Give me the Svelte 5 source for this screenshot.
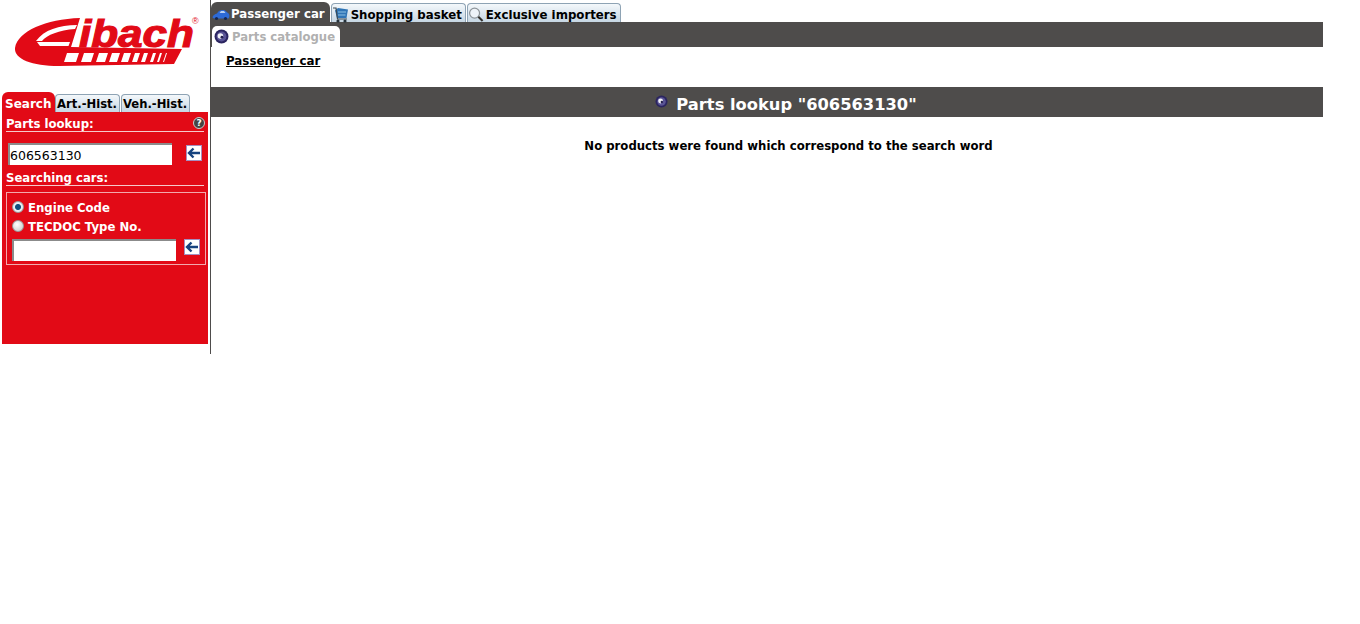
<script>
  const term = '606563130';
  const topTabs = [
    { label: 'Passenger car', icon: 'car', active: true },
    { label: 'Shopping basket', icon: 'basket', active: false },
    { label: 'Exclusive importers', icon: 'lens', active: false }
  ];
  const sideTabs = ['Search', 'Art.-Hist.', 'Veh.-Hist.'];
</script>

{#snippet arrow()}
  <button class="go" aria-label="Go">
    <svg width="14" height="12" viewBox="0 0 14 12">
      <path d="M6.500 1.500 2 6l4.500 4.500M2.500 6H13" fill="none" stroke="#17437f" stroke-width="2.400" />
    </svg>
  </button>
{/snippet}

{#snippet disc(size)}
  <svg width={size} height={size} viewBox="0 0 14 14">
    <circle cx="7" cy="7" r="6.500" fill="#2b2560" />
    <circle cx="7" cy="7" r="4.600" fill="#5a5496" />
    <circle cx="6" cy="6.500" r="2.600" fill="#f1f1f6" />
    <circle cx="7.400" cy="7.600" r="1.300" fill="#24204f" />
  </svg>
{/snippet}

<div class="page">
  <aside class="side">
    <div class="logo">
      <svg width="186" height="52" viewBox="0 0 186 52">
        <path d="M1 33C4 16 32 4 66 3L57 32 168 34 160 49 45 51C18 51 0 44 1 33Z" fill="#e20a16" />
        <path d="M63 10C45 10 30 15 22 26H28C33 20 45 15 61 14ZM23 27H56L54.500 31H26Z" fill="#fff" />
        <text x="65" y="32" class="logo-word" textLength="115" lengthAdjust="spacingAndGlyphs">ibach</text>
        <path fill="#fff" d="M53 38h12l-3 9H50ZM70 38h10l-3 9H67ZM85 38h9l-3 9h-9ZM98 38h8l-3 9h-8ZM110 38h7l-3 9h-7ZM121 38h5l-3 9h-5ZM130 38h4l-3 9h-4ZM139 38h3l-3 9h-3ZM146 38h2l-3 9h-2ZM152 38h1l-3 9h-1Z" />
        <text x="178" y="9" class="logo-mark">®</text>
      </svg>
    </div>

    <div class="side-tabs">
      {#each sideTabs as tab, i}
        <div class="side-tab" class:on={i === 0}>{tab}</div>
      {/each}
    </div>

    <div class="panel">
      <div class="heading">
        <span>Parts lookup:</span>
        <span class="help">?</span>
      </div>
      <div class="field-row first">
        <input class="first-input" value={term} />
        {@render arrow()}
      </div>
      <div class="heading">Searching cars:</div>
      <div class="box">
        <label class="radio"><input type="radio" name="kind" checked />Engine Code</label>
        <label class="radio"><input type="radio" name="kind" />TECDOC Type No.</label>
        <div class="field-row">
          <input class="second-input" />
          {@render arrow()}
        </div>
      </div>
    </div>
  </aside>

  <main class="main">
    <nav class="top-tabs">
      {#each topTabs as tab}
        <div class="top-tab" class:on={tab.active}>
          {#if tab.icon === 'car'}
            <svg width="18" height="13" viewBox="0 0 18 13">
              <path d="M0.500 9.500C0.500 7.500 3 6 5 5.500 7 2 10 1.500 13 2.500L16 5C17.800 6 17.800 9 16.500 10.500H2Z" fill="#2d6ad6" />
              <path d="M7.500 5 9 3h3L13.500 5Z" fill="#b9d0f2" />
              <circle cx="4.500" cy="10.500" r="1.600" fill="#14264f" />
              <circle cx="13.500" cy="10.500" r="1.600" fill="#14264f" />
            </svg>
          {:else if tab.icon === 'basket'}
            <svg width="17" height="16" viewBox="0 0 17 16">
              <path d="M3 3.500 6 1l10 1.500L14.500 11H5Z" fill="#2f74b5" />
              <path d="M6 5h8M6 8h7.500" stroke="#8cc0e4" />
              <path d="M1 1h3l1.500 11H15" fill="none" stroke="#3c4a55" stroke-width="1.200" />
              <circle cx="6" cy="14" r="1.600" fill="#26323b" />
              <circle cx="13" cy="14" r="1.600" fill="#26323b" />
            </svg>
          {:else}
            <svg width="16" height="17" viewBox="0 0 17 17">
              <circle cx="7" cy="7" r="5.300" fill="#eef3f8" stroke="#8d9499" stroke-width="1.300" />
              <path d="M11 11l4.500 4.500" stroke="#33302c" stroke-width="2.200" />
            </svg>
          {/if}
          <span>{tab.label}</span>
        </div>
      {/each}
    </nav>

    <div class="sub-bar">
      <div class="sub-tab">
        {@render disc(15)}
        <span>Parts catalogue</span>
      </div>
    </div>

    <div class="crumb"><span>Passenger car</span></div>

    <h1 class="title">
      {@render disc(13)}
      <span>Parts lookup "{term}"</span>
    </h1>

    <p class="empty">No products were found which correspond to the search word</p>
  </main>
</div>

<style>
  :global(body) {
    margin: 0;
    background: #fff;
  }

  .page {
    display: flex;
    width: 1323px;
    height: 354px;
    font-family: "DejaVu Sans", Verdana, sans-serif;
    font-size: 12px;
    font-weight: 700;
    color: #000;
  }

  .side {
    width: 210px;
    flex: none;
    box-sizing: border-box;
    padding-left: 2px;
  }

  .logo {
    height: 92px;
    box-sizing: border-box;
    padding: 15px 0 0 12px;
  }

  .logo svg {
    display: block;
    overflow: visible;
  }

  .logo-word {
    font-family: "Liberation Sans", Arial, sans-serif;
    font-size: 39px;
    font-weight: 700;
    font-style: italic;
    fill: #e20a16;
    stroke: #e20a16;
    stroke-width: 1.200px;
  }

  .logo-mark {
    font-family: "Liberation Sans", Arial, sans-serif;
    font-size: 9px;
    font-weight: 400;
    fill: #e20a16;
  }

  .side-tabs {
    display: flex;
    height: 20px;
    align-items: flex-end;
  }

  .side-tab {
    height: 18px;
    line-height: 19px;
    padding: 0 2px 0 1px;
    margin-right: 1px;
    box-sizing: border-box;
    border: 1px solid #8ea3b4;
    border-bottom: 0;
    border-radius: 4px 4px 0 0;
    background: linear-gradient(#f4f8fb, #c6d6e3);
    font-size: 11.600px;
    white-space: nowrap;
  }

  .side-tab.on {
    height: 20px;
    line-height: 24px;
    width: 53px;
    padding: 0 3px;
    margin-right: 0;
    border: 0;
    border-radius: 6px 6px 0 0;
    background: #e20a16;
    color: #fff;
    font-size: 12px;
  }

  .panel {
    width: 206px;
    height: 232px;
    box-sizing: border-box;
    padding: 3px 4px 0;
    background: #e20a16;
    color: #fff;
    font-size: 11.700px;
  }

  .heading {
    display: flex;
    justify-content: space-between;
    align-items: flex-start;
    height: 16px;
    line-height: 18px;
    border-bottom: 1px solid #f6c9cb;
  }

  .help {
    width: 12px;
    height: 12px;
    margin: 2px -1px 0 0;
    border-radius: 50%;
    background: #444;
    border: 1px solid #ccc;
    box-sizing: border-box;
    font-size: 9px;
    line-height: 10px;
    text-align: center;
  }

  .field-row {
    display: flex;
    align-items: flex-start;
  }

  .field-row.first {
    height: 22px;
    margin: 11px 0 4px;
  }

  .field-row.first .go {
    margin-top: 2px;
  }

  input:not([type]) {
    height: 22px;
    box-sizing: border-box;
    border: 0;
    border-top: 2px solid #8b8b8b;
    border-left: 2px solid #8b8b8b;
    padding: 0;
    background: #fff;
    font-family: "DejaVu Sans", Verdana, sans-serif;
    font-size: 12.500px;
    color: #000;
    outline: none;
  }

  .first-input {
    width: 164px;
    margin: 0 14px 0 2px;
  }

  .second-input {
    width: 164px;
    margin-right: 8px;
  }

  .go {
    width: 16px;
    height: 16px;
    padding: 0;
    border: 1px solid #a58fc0;
    background: #fff;
    display: flex;
    align-items: center;
    justify-content: center;
  }

  .box {
    margin-top: 6px;
    width: 200px;
    height: 73px;
    box-sizing: border-box;
    border: 1px solid #f2a9ad;
    padding: 5px 5px 0;
  }

  .radio {
    display: flex;
    align-items: center;
    height: 19px;
    white-space: nowrap;
  }

  .radio input {
    appearance: none;
    width: 12px;
    height: 12px;
    margin: 0 4px 2px 0;
    border-radius: 50%;
    background: radial-gradient(circle at 40% 35%, #fff, #c4c4c4);
    border: 1px solid #9a9a9a;
    box-sizing: border-box;
  }

  .radio input:checked {
    background: radial-gradient(circle at 50% 50%, #0f4f7f 0 2.500px, #e6eef3 3.500px);
  }

  .box .field-row {
    margin-top: 3px;
  }

  .main {
    flex: 1;
    min-width: 0;
    border-left: 1px solid #4e4c4b;
  }

  .top-tabs {
    display: flex;
    height: 22px;
    padding-top: 2px;
    box-sizing: border-box;
    align-items: flex-end;
  }

  .top-tab {
    display: flex;
    align-items: center;
    gap: 2px;
    height: 19px;
    box-sizing: border-box;
    padding: 3px 3px 0 0;
    margin-right: 1px;
    border: 1px solid #8ea3b4;
    border-bottom: 0;
    border-radius: 4px 4px 0 0;
    background: linear-gradient(#f4f8fb, #c6d6e3);
    font-size: 11.780px;
    white-space: nowrap;
  }

  .top-tab.on {
    height: 20px;
    gap: 1px;
    padding: 4px 5px 0 1px;
    border: 0;
    border-radius: 6px 6px 0 0;
    background: #4e4c4b;
    color: #fff;
  }

  .sub-bar {
    height: 25px;
    background: #4e4c4b;
    display: flex;
    align-items: flex-end;
    padding-left: 1px;
  }

  .sub-tab {
    display: flex;
    align-items: center;
    gap: 3px;
    height: 21px;
    box-sizing: border-box;
    padding: 0 5px 0 2px;
    background: #fff;
    border-radius: 5px 5px 0 0;
    color: #b0b0b0;
    font-size: 11.650px;
    white-space: nowrap;
  }

  .crumb {
    height: 40px;
    padding: 7px 0 0 15px;
    box-sizing: border-box;
    font-size: 11.850px;
    text-decoration: underline;
  }

  .title {
    margin: 0;
    height: 30px;
    box-sizing: border-box;
    padding: 4px 0 0 38px;
    display: flex;
    align-items: center;
    justify-content: center;
    gap: 8px;
    background: #4e4c4b;
    color: #fff;
    font-size: 16.300px;
    font-weight: 700;
  }

  .title svg {
    margin-top: -6px;
  }

  .empty {
    margin: 21px 0 0;
    padding-left: 43px;
    text-align: center;
    font-size: 11.700px;
    line-height: 16px;
  }
</style>
